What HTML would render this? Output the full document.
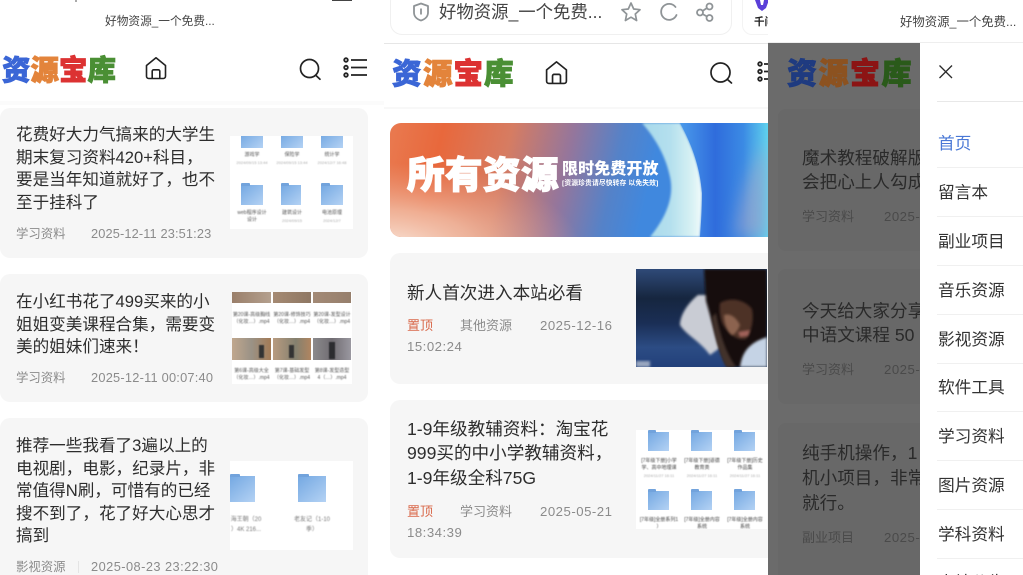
<!DOCTYPE html>
<html lang="zh">
<head>
<meta charset="utf-8">
<title>资源宝库</title>
<style>
html,body{margin:0;padding:0;width:1023px;height:575px;overflow:hidden;background:#fff}
body{position:relative;font-family:"Liberation Sans","Noto Sans CJK SC",sans-serif;color:#2d2d2d}
div,span,svg{position:absolute}
.t{white-space:nowrap}
.card{background:#f6f6f6;border-radius:10px}
.a{font-size:16.6px;line-height:23px;height:23px}
.b{font-size:17.6px;line-height:25px;height:25px}
.m{font-size:12.4px;line-height:16px;height:16px;color:#8b8b8b}
.d{font-size:12.8px;line-height:16px;height:16px;color:#8b8b8b}
.m2{font-size:13px;line-height:16px;height:16px;color:#8b8b8b}
.d2{font-size:13.2px;line-height:16px;height:16px;color:#8b8b8b;letter-spacing:.5px}
.logo{font-weight:900;line-height:34px;height:34px}
.logo span{-webkit-text-stroke:.9px currentColor}
.f{background:linear-gradient(140deg,#74a8e2,#b4d2f4)}
.f:before{content:"";position:absolute;left:0;top:-2px;width:40%;height:3px;background:#72a3dc;border-radius:1px 1px 0 0}
.c{font-size:5px;line-height:7px;color:#555;text-align:center;white-space:nowrap;filter:blur(.5px)}
.menu{left:938px;font-size:16.7px;line-height:24px;height:24px;color:#333;white-space:nowrap}
.hr{left:937px;width:86px;height:1px;background:#f0f0f0}
.k{color:#2a2a2a}
.g{color:#4a4a4a}
</style>
</head>
<body>

<!-- PANEL 1 -->
<div style="left:0;top:0;width:384px;height:575px;background:#fff;overflow:hidden">
  <div style="left:75px;top:0;width:2px;height:2px;background:#aaa"></div>
  <div style="left:332px;top:0;width:20px;height:1px;background:#444"></div>
  <div class="t" style="left:105px;top:14px;font-size:11.7px;line-height:16px;color:#444">好物资源_一个免费...</div>
  <div class="t logo" style="left:2px;top:54px;font-size:28.4px;width:120px"><span style="left:0;color:#3b66d6">资</span><span style="left:28.5px;color:#e3843b">源</span><span style="left:57px;color:#dc3232">宝</span><span style="left:85.5px;color:#4a8f34">库</span></div>
  <svg style="left:144px;top:56px" width="24" height="24" viewBox="0 0 24 24" fill="none" stroke="#222" stroke-width="1.6" stroke-linejoin="round"><path d="M2.5 9.5 12 1.8l9.5 7.7v10.8a2.2 2.2 0 0 1-2.2 2.2H4.7a2.2 2.2 0 0 1-2.2-2.2z"/><path d="M8.2 22.5v-7.2a1.5 1.5 0 0 1 1.5-1.5h4.600a1.500 1.500 0 0 1 1.500 1.500v7.200"/></svg>
  <svg style="left:298px;top:57px" width="24" height="24" viewBox="0 0 24 24" fill="none" stroke="#222" stroke-width="1.7" stroke-linecap="round"><circle cx="11.5" cy="11.5" r="9"/><path d="m18 18.5 4 3.700"/></svg>
  <svg style="left:342px;top:57px" width="26" height="22" viewBox="0 0 26 22" fill="none" stroke="#222" stroke-width="1.8"><circle cx="4" cy="3" r="1.8"/><circle cx="4" cy="10.5" r="1.8"/><circle cx="4" cy="18" r="1.8"/><path d="M9 3h16M9 10.5h16M9 18h16"/></svg>
  <div style="left:0;top:101px;width:384px;height:4px;background:#fbfbfb"></div>

  <div class="card" style="left:0;top:108px;width:368px;height:150px"></div>
  <div class="t a" style="left:16px;top:123px">花费好大力气搞来的大学生</div>
  <div class="t a" style="left:16px;top:146px">期末复习资料420+科目，</div>
  <div class="t a" style="left:16px;top:168px">要是当年知道就好了，也不</div>
  <div class="t a" style="left:16px;top:191px">至于挂科了</div>
  <div class="t m" style="left:16px;top:226px">学习资料</div>
  <div class="t d" style="left:91px;top:226px;letter-spacing:.13px">2025-12-11 23:51:23</div>
  <div style="left:230px;top:136px;width:123px;height:93px;background:#fff;overflow:hidden">
    <div class="f" style="left:11px;top:-2px;width:22px;height:14px"></div>
    <div class="f" style="left:51px;top:-2px;width:22px;height:14px"></div>
    <div class="f" style="left:91px;top:-2px;width:22px;height:14px"></div>
    <div class="c" style="left:2px;top:16px;width:40px">游戏学<br><span style="position:static;color:#aaa;font-size:4px">2024/09/15 13:44</span></div>
    <div class="c" style="left:42px;top:16px;width:40px">保险学<br><span style="position:static;color:#aaa;font-size:4px">2024/09/15 13:44</span></div>
    <div class="c" style="left:82px;top:16px;width:40px">统计学<br><span style="position:static;color:#aaa;font-size:4px">2024/12/7 16:48</span></div>
    <div class="f" style="left:11px;top:49px;width:22px;height:20px"></div>
    <div class="f" style="left:51px;top:49px;width:20px;height:20px"></div>
    <div class="f" style="left:91px;top:49px;width:22px;height:20px"></div>
    <div class="c" style="left:2px;top:74px;width:40px">web程序设计<br>设计</div>
    <div class="c" style="left:42px;top:74px;width:40px">建筑设计<br><span style="position:static;color:#aaa;font-size:4px">2024/09/15</span></div>
    <div class="c" style="left:82px;top:74px;width:40px">电池原理<br><span style="position:static;color:#aaa;font-size:4px">2024/12/7</span></div>
  </div>

  <div class="card" style="left:0;top:274px;width:368px;height:128px"></div>
  <div class="t a" style="left:16px;top:290px">在小红书花了499买来的小</div>
  <div class="t a" style="left:16px;top:313px">姐姐变美课程合集，需要变</div>
  <div class="t a" style="left:16px;top:335px">美的姐妹们速来！</div>
  <div class="t m" style="left:16px;top:370px">学习资料</div>
  <div class="t d" style="left:91px;top:370px;letter-spacing:.23px">2025-12-11 00:07:40</div>
  <div style="left:232px;top:292px;width:120px;height:92px;background:#fff;overflow:hidden">
    <div style="left:0;top:0;width:39px;height:11px;background:linear-gradient(90deg,#9a7f6a,#b4a08e)"></div>
    <div style="left:41px;top:0;width:38px;height:11px;background:linear-gradient(90deg,#a58a73,#8e7763)"></div>
    <div style="left:81px;top:0;width:38px;height:11px;background:linear-gradient(90deg,#a38a76,#967f6c)"></div>
    <div class="c" style="left:0;top:20px;width:39px">第20课-高级胸线<br>（化妆…）.mp4</div>
    <div class="c" style="left:41px;top:20px;width:38px">第20课-修饰技巧<br>（化妆…）.mp4</div>
    <div class="c" style="left:81px;top:20px;width:38px">第20课-发型设计<br>（化妆…）.mp4</div>
    <div style="left:0;top:46px;width:39px;height:22px;background:linear-gradient(90deg,#c0a78d,#9a9286 50%,#a37a55)"></div>
    <div style="left:41px;top:46px;width:38px;height:22px;background:linear-gradient(90deg,#b89b80,#84806f 60%,#b08560)"></div>
    <div style="left:81px;top:46px;width:38px;height:22px;background:linear-gradient(90deg,#8b8a8c,#706c72 50%,#9a98a0)"></div>
    <div style="left:27px;top:53px;width:5px;height:13px;background:#333;filter:blur(.5px)"></div>
    <div style="left:57px;top:53px;width:5px;height:13px;background:#333;filter:blur(.5px)"></div>
    <div style="left:97px;top:50px;width:6px;height:17px;background:#2c2c30;filter:blur(.5px)"></div>
    <div class="c" style="left:0;top:76px;width:39px">第6课-高级大全<br>（化妆…）.mp4</div>
    <div class="c" style="left:41px;top:76px;width:38px">第7课-基础发型<br>（化妆…）.mp4</div>
    <div class="c" style="left:81px;top:76px;width:38px">第8课-发型造型<br>4（…）.mp4</div>
  </div>

  <div class="card" style="left:0;top:418px;width:368px;height:170px"></div>
  <div class="t a" style="left:16px;top:434px">推荐一些我看了3遍以上的</div>
  <div class="t a" style="left:16px;top:457px">电视剧，电影，纪录片，非</div>
  <div class="t a" style="left:16px;top:479px">常值得N刷，可惜有的已经</div>
  <div class="t a" style="left:16px;top:502px">搜不到了，花了好大心思才</div>
  <div class="t a" style="left:16px;top:524px">搞到</div>
  <div class="t m" style="left:16px;top:559px">影视资源</div>
  <div style="left:78px;top:561px;width:1px;height:12px;background:#e4e4e4"></div>
  <div class="t d" style="left:91px;top:559px;letter-spacing:.45px">2025-08-23 23:22:30</div>
  <div style="left:230px;top:461px;width:123px;height:89px;background:#fff;overflow:hidden">
    <div class="f" style="left:0;top:15px;width:25px;height:26px"></div>
    <div class="f" style="left:68px;top:15px;width:28px;height:26px"></div>
    <div class="c" style="left:-6px;top:54px;width:44px;font-size:6px;line-height:10px;color:#777">海王朝（20<br>）4K 216...</div>
    <div class="c" style="left:58px;top:54px;width:48px;font-size:6px;line-height:10px;color:#777">老友记（1-10<br>季）</div>
  </div>
</div>

<!-- PANEL 2 -->
<div style="left:384px;top:0;width:384px;height:575px;background:#fff;overflow:hidden">
  <div style="left:6px;top:-10px;width:340px;height:43px;border:1px solid #f0f0f0;border-radius:12px;background:#fff"></div>
  <div style="left:358px;top:-10px;width:40px;height:43px;border:1px solid #f3f3f3;border-radius:10px;background:#fff"></div>
  <svg style="left:28px;top:2px" width="18" height="20" viewBox="0 0 18 20" fill="none" stroke="#8f9497" stroke-width="1.8" stroke-linejoin="round"><path d="M9 1.5 16 4v6.500c0 4-3 6.800-7 8-4-1.200-7-4-7-8V4z"/><path d="M9 6.5v6"/></svg>
  <div class="t" style="left:55px;top:0;font-size:17.4px;line-height:24px;color:#444">好物资源_一个免费...</div>
  <svg style="left:236px;top:1px" width="22" height="22" viewBox="0 0 22 22" fill="none" stroke="#8f9497" stroke-width="1.7" stroke-linejoin="round"><path d="m11 2 2.700 6 6.300.7-4.700 4.300 1.300 6.500L11 16.200 5.400 19.500 6.700 13 2 8.700 8.300 8z"/></svg>
  <svg style="left:275px;top:2px" width="20" height="20" viewBox="0 0 20 20" fill="none" stroke="#8f9497" stroke-width="1.8" stroke-linecap="round"><path d="M16.500 5A8 8 0 1 0 17.500 13"/></svg>
  <svg style="left:311px;top:2px" width="20" height="20" viewBox="0 0 20 20" fill="none" stroke="#8f9497" stroke-width="1.8"><circle cx="14.500" cy="4.500" r="3"/><circle cx="5" cy="10.500" r="3"/><circle cx="14.500" cy="16" r="3"/><path d="m7.500 9 4.500-3M7.500 12l4.500 2.500"/></svg>
  <svg style="left:370px;top:0" width="16" height="14" viewBox="0 0 16 14"><path d="M1 0h14l-3 8-4 3-4-3z" fill="#5a3fd8"/><path d="M6 0h4L9 5H7z" fill="#fff"/></svg>
  <div class="t" style="left:370px;top:15px;font-size:10.5px;line-height:14px;font-weight:700;color:#222;width:14px;overflow:hidden">千问</div>
  <div style="left:0;top:43px;width:384px;height:1px;background:#e6e6e6"></div>
  <div class="t logo" style="left:8px;top:58px;font-size:29.5px;width:125px"><span style="left:0;color:#3b66d6">资</span><span style="left:31px;color:#e3843b">源</span><span style="left:61.5px;color:#dc3232">宝</span><span style="left:92px;color:#4a8f34">库</span></div>
  <svg style="left:160px;top:60px" width="25" height="25" viewBox="0 0 24 24" fill="none" stroke="#222" stroke-width="1.6" stroke-linejoin="round"><path d="M2.5 9.5 12 1.8l9.5 7.7v10.800a2.200 2.200 0 0 1-2.200 2.200H4.700a2.200 2.200 0 0 1-2.200-2.200z"/><path d="M8.200 22.500v-7.200a1.500 1.500 0 0 1 1.500-1.500h4.600a1.500 1.500 0 0 1 1.500 1.500v7.200"/></svg>
  <svg style="left:325px;top:61px" width="24" height="24" viewBox="0 0 24 24" fill="none" stroke="#222" stroke-width="1.7" stroke-linecap="round"><circle cx="11.500" cy="11.500" r="9.500"/><path d="m18.500 18.500 4 3.500"/></svg>
  <svg style="left:372px;top:61px" width="12" height="22" viewBox="0 0 12 22" fill="none" stroke="#222" stroke-width="1.8"><circle cx="4" cy="3" r="1.800"/><circle cx="4" cy="10.500" r="1.800"/><circle cx="4" cy="18" r="1.800"/><path d="M8 3h4M8 10.500h4M8 18h4"/></svg>
  <div style="left:0;top:107px;width:384px;height:2px;background:#f8f8f8"></div>

  <!-- banner -->
  <div style="left:6px;top:123px;width:378px;height:114px;border-radius:11px 0 0 11px;overflow:hidden">
    <svg style="left:0;top:0" width="378" height="114" viewBox="0 0 378 114">
      <defs>
        <linearGradient id="bg" gradientUnits="userSpaceOnUse" x1="0" y1="0" x2="260" y2="60"><stop offset="0" stop-color="#e97a50"/><stop offset=".2" stop-color="#e8683c"/><stop offset=".45" stop-color="#d67c62"/><stop offset=".68" stop-color="#94769c"/><stop offset=".86" stop-color="#5582c8"/><stop offset="1" stop-color="#4088de"/></linearGradient>
        <radialGradient id="pe" gradientUnits="userSpaceOnUse" cx="0" cy="0" r="1" gradientTransform="translate(0 125) scale(190 85)"><stop offset="0" stop-color="#f9e6da"/><stop offset=".45" stop-color="#f2c4ae" stop-opacity=".75"/><stop offset="1" stop-color="#eaa58c" stop-opacity="0"/></radialGradient>
        <linearGradient id="wv" gradientUnits="userSpaceOnUse" x1="250" y1="0" x2="312" y2="0"><stop offset="0" stop-color="#a5d8ea"/><stop offset=".5" stop-color="#b5e0ee"/><stop offset=".85" stop-color="#d9f2f4"/><stop offset="1" stop-color="#f2fbfb"/></linearGradient>
        <linearGradient id="rt" x1="0" y1="0" x2="1" y2="0"><stop offset="0" stop-color="#4a9aea"/><stop offset=".4" stop-color="#2f6cdc"/><stop offset=".72" stop-color="#3b8ae4"/><stop offset="1" stop-color="#5fd2ee"/></linearGradient>
        <filter id="bl" x="-50%" y="-50%" width="200%" height="200%"><feGaussianBlur stdDeviation="8"/></filter>
        <filter id="b2"><feGaussianBlur stdDeviation="1"/></filter>
      </defs>
      <rect width="378" height="114" fill="url(#bg)"/>
      <rect width="260" height="114" fill="url(#pe)"/>
      <path d="M252 0h38c12 22 20 44 22 70 0 16-1 30-2 44h-50c18-22 24-42 20-60-4-20-14-38-28-54z" fill="url(#wv)" filter="url(#b2)"/>
      <path d="M290 0h88v114h-68c1-14 2-28 2-44-2-26-10-48-22-70z" fill="url(#rt)"/>
      <path d="M345 114c5-40 15-70 33-96v96z" fill="#a8a5c8" opacity=".6" filter="url(#bl)"/>
    </svg>
    <div class="t" style="left:17px;top:29px;font-size:37.5px;line-height:46px;font-weight:900;color:#fff;-webkit-text-stroke:1.2px #fff;letter-spacing:.5px">所有资源</div>
    <div class="t" style="left:172px;top:35px;font-size:16px;line-height:24px;font-weight:900;color:#fff;letter-spacing:.1px">限时免费开放</div>
    <div class="t" style="left:172px;top:55px;font-size:6.8px;line-height:12px;font-weight:700;color:#fff;letter-spacing:.1px">[资源珍贵请尽快转存 以免失效]</div>
  </div>

  <div class="card" style="left:6px;top:253px;width:400px;height:131px"></div>
  <div class="t b" style="left:23px;top:281px">新人首次进入本站必看</div>
  <div class="t m2" style="left:23px;top:318px;color:#d9694b">置顶</div>
  <div class="t m2" style="left:76px;top:318px">其他资源</div>
  <div class="t d2" style="left:156px;top:318px">2025-12-16</div>
  <div class="t d2" style="left:23px;top:339px">15:02:24</div>
  <svg style="left:252px;top:269px" width="131" height="98" viewBox="0 0 131 98">
    <defs>
      <linearGradient id="ph" x1="0" y1="0" x2="0" y2="1"><stop offset="0" stop-color="#2f4a78"/><stop offset=".3" stop-color="#16263f"/><stop offset=".55" stop-color="#1a2e55"/><stop offset=".8" stop-color="#2c4c84"/><stop offset="1" stop-color="#22407a"/></linearGradient>
      <filter id="pb" x="-20%" y="-20%" width="140%" height="140%"><feGaussianBlur stdDeviation="1.2"/></filter>
    </defs>
    <rect width="131" height="98" fill="url(#ph)"/>
    <path d="M62 26C52 34 44 46 44 56c6 10 20 16 30 30l14-10-8-50z" fill="#c9ccd4" filter="url(#pb)"/>
    <path d="M68 0h63v98H92C84 86 78 60 70 32z" fill="#15100e" filter="url(#pb)"/>
    <path d="M84 34c10-6 24-4 32 6 2 10 0 22-6 30-10 2-18-6-24-16-2-6-3-14-2-20z" fill="#4e3228" filter="url(#pb)"/>
    <path d="M88 46c6-2 12 2 16 10-2 6-6 10-8 10-5-4-8-12-8-20z" fill="#8c6450" filter="url(#pb)"/>
    <path d="M102 63l12-2-2 6-8 1z" fill="#a0625a" filter="url(#pb)"/>
    <path d="M104 98c2-14 8-24 27-30v30z" fill="#c5d3e5" filter="url(#pb)"/>
    <path d="M76 48c2 16 6 34 14 50h10C90 84 84 66 80 44z" fill="#42322b" filter="url(#pb)"/>
    <path d="M0 92h14v6H0z" fill="#9aa7bf" filter="url(#pb)"/>
  </svg>

  <div class="card" style="left:6px;top:400px;width:400px;height:158px"></div>
  <div class="t b" style="left:23px;top:417px">1-9年级教辅资料：淘宝花</div>
  <div class="t b" style="left:23px;top:441px">999买的中小学教辅资料，</div>
  <div class="t b" style="left:23px;top:466px">1-9年级全科75G</div>
  <div class="t m2" style="left:23px;top:504px;color:#d9694b">置顶</div>
  <div class="t m2" style="left:76px;top:504px">学习资料</div>
  <div class="t d2" style="left:156px;top:504px">2025-05-21</div>
  <div class="t d2" style="left:23px;top:525px">18:34:39</div>
  <div style="left:252px;top:430px;width:131px;height:99px;background:#fff;overflow:hidden">
    <div class="f" style="left:12px;top:2px;width:21px;height:19px"></div>
    <div class="f" style="left:55px;top:2px;width:21px;height:19px"></div>
    <div class="f" style="left:98px;top:2px;width:21px;height:19px"></div>
    <div class="c" style="left:2px;top:28px;width:42px;color:#444">[7年级下册]小学<br>学、高中地理课<br><span style="position:static;color:#aaa;font-size:4px">2024/11/27 16:11</span></div>
    <div class="c" style="left:45px;top:28px;width:42px;color:#444">[7年级下册]道德<br>教育类<br><span style="position:static;color:#aaa;font-size:4px">2024/11/27 16:11</span></div>
    <div class="c" style="left:88px;top:28px;width:42px;color:#444">[7年级下册]历史<br>作品集<br><span style="position:static;color:#aaa;font-size:4px">2024/11/27 16:11</span></div>
    <div class="f" style="left:12px;top:61px;width:21px;height:19px"></div>
    <div class="f" style="left:55px;top:61px;width:21px;height:19px"></div>
    <div class="f" style="left:98px;top:61px;width:21px;height:19px"></div>
    <div class="c" style="left:2px;top:87px;width:42px;color:#444">[7年级]全册系列1<br>）</div>
    <div class="c" style="left:45px;top:87px;width:42px;color:#444">[7年级]全册内容<br>系统</div>
    <div class="c" style="left:88px;top:87px;width:42px;color:#444">[7年级]全册内容<br>系统</div>
  </div>
</div>

<!-- PANEL 3 -->
<div style="left:768px;top:0;width:255px;height:575px;background:#fff;overflow:hidden">
  <div class="t" style="left:132px;top:14px;font-size:12.4px;line-height:16px;color:#444">好物资源_一个免费...</div>
  <div style="left:0;top:42px;width:255px;height:1px;background:#eee"></div>
  <div style="left:0;top:43px;width:152px;height:532px;background:#6b6b6b;overflow:hidden">
    <div class="t logo" style="left:19px;top:15px;font-size:30px;width:130px"><span style="left:0;color:#1f3b80">资</span><span style="left:31.5px;color:#8c5220">源</span><span style="left:63px;color:#8c1414">宝</span><span style="left:94.5px;color:#2a5a1a">库</span></div>
    <div style="left:10px;top:66px;width:160px;height:142px;background:#686868;border-radius:8px"></div>
    <div style="left:10px;top:226px;width:160px;height:135px;background:#686868;border-radius:8px"></div>
    <div style="left:10px;top:380px;width:160px;height:170px;background:#686868;border-radius:8px"></div>
    <div class="t b k" style="left:34px;top:103px">魔术教程破解版</div>
    <div class="t b k" style="left:34px;top:127px">会把心上人勾成</div>
    <div class="t m2 g" style="left:34px;top:166px">学习资料</div>
    <div class="t d2 g" style="left:116px;top:166px">2025-12</div>
    <div class="t b k" style="left:34px;top:256px">今天给大家分享</div>
    <div class="t b k" style="left:34px;top:280px">中语文课程 50</div>
    <div class="t m2 g" style="left:34px;top:319px">学习资料</div>
    <div class="t d2 g" style="left:116px;top:319px">2025-12</div>
    <div class="t b k" style="left:34px;top:398px">纯手机操作，1</div>
    <div class="t b k" style="left:34px;top:423px">机小项目，非常</div>
    <div class="t b k" style="left:34px;top:448px">就行。</div>
    <div class="t m2 g" style="left:34px;top:487px">副业项目</div>
    <div class="t d2 g" style="left:116px;top:487px">2025-12</div>
  </div>
</div>

<!-- drawer -->
<div style="left:920px;top:43px;width:103px;height:532px;background:#fff;border-radius:14px 0 0 0"></div>
<svg style="left:937px;top:63px" width="18" height="18" viewBox="0 0 18 18" fill="none" stroke="#2a2a2a" stroke-width="1.3"><path d="M2.5 2.5 15 15M15 2.5 2.5 15"/></svg>
<div class="hr" style="top:101px;background:#e8e8e8"></div>
<div class="menu" style="top:132px;color:#4a78d6">首页</div><div class="hr" style="top:167px"></div>
<div class="menu" style="top:181px">留言本</div><div class="hr" style="top:216px"></div>
<div class="menu" style="top:230px">副业项目</div><div class="hr" style="top:265px"></div>
<div class="menu" style="top:279px">音乐资源</div><div class="hr" style="top:314px"></div>
<div class="menu" style="top:328px">影视资源</div><div class="hr" style="top:363px"></div>
<div class="menu" style="top:376px">软件工具</div><div class="hr" style="top:411px"></div>
<div class="menu" style="top:425px">学习资料</div><div class="hr" style="top:460px"></div>
<div class="menu" style="top:474px">图片资源</div><div class="hr" style="top:509px"></div>
<div class="menu" style="top:523px">学科资料</div><div class="hr" style="top:558px"></div>
<div class="menu" style="top:571px;height:4px;overflow:hidden">本站公告</div>

</body>
</html>
